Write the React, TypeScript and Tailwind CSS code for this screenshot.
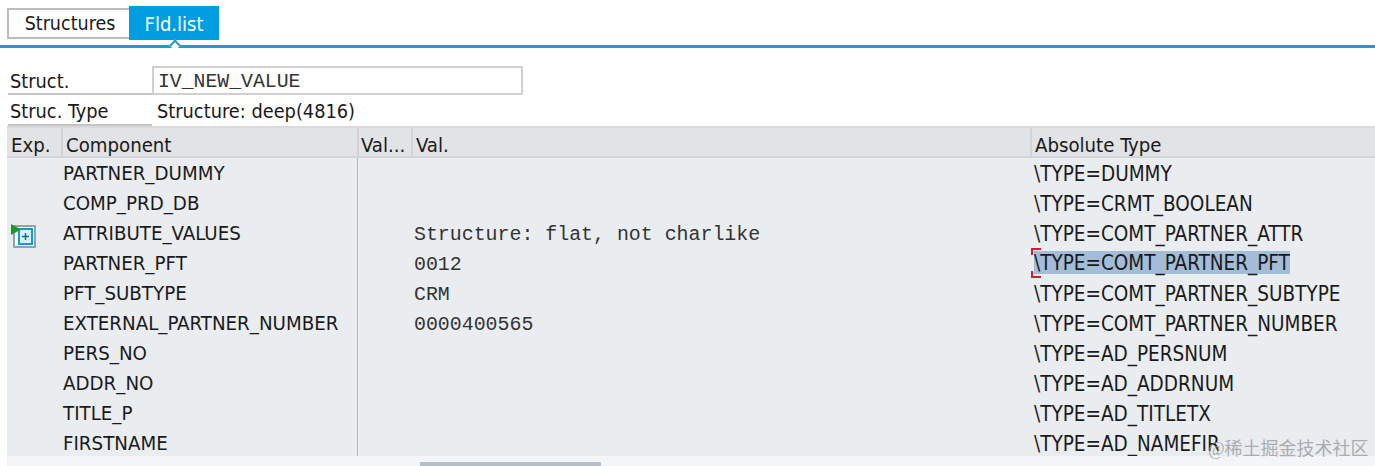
import React from 'react';

const rows = [
  ['PARTNER_DUMMY', '', '\\TYPE=DUMMY'],
  ['COMP_PRD_DB', '', '\\TYPE=CRMT_BOOLEAN'],
  ['ATTRIBUTE_VALUES', 'Structure: flat, not charlike', '\\TYPE=COMT_PARTNER_ATTR'],
  ['PARTNER_PFT', '0012', '\\TYPE=COMT_PARTNER_PFT'],
  ['PFT_SUBTYPE', 'CRM', '\\TYPE=COMT_PARTNER_SUBTYPE'],
  ['EXTERNAL_PARTNER_NUMBER', '0000400565', '\\TYPE=COMT_PARTNER_NUMBER'],
  ['PERS_NO', '', '\\TYPE=AD_PERSNUM'],
  ['ADDR_NO', '', '\\TYPE=AD_ADDRNUM'],
  ['TITLE_P', '', '\\TYPE=AD_TITLETX'],
  ['FIRSTNAME', '', '\\TYPE=AD_NAMEFIR'],
];

const sans = "font-['DejaVu_Sans',sans-serif] font-stretch-condensed";
const mono = "font-['Liberation_Mono',monospace] font-stretch-normal";

const ExpandIcon = () => (
  <svg width="26" height="24" viewBox="0 0 26 24" className="block">
    <rect x="3" y="2" width="21" height="21" fill="#fff" stroke="#93a2ad" strokeWidth="2" />
    <rect x="8" y="5" width="13" height="15" fill="#d8f0fa" stroke="#0d9fd0" strokeWidth="2" />
    <path d="M14.500 9v7M11 12.500h7" stroke="#0b6f9c" strokeWidth="1.500" />
    <path d="M0 0l10 5.500-10 5.500z" fill="#1a9a2c" />
  </svg>
);

export default function App() {
  return (
    <div className={`relative w-[1375px] h-[466px] overflow-hidden bg-white text-[19.800px] leading-[30px] text-[#1a1a1a] ${sans}`}>
      {/* Tabs */}
      <div className="relative h-[48px] pt-[6px] border-b-[3px] border-[#1a9fc9]">
        <div className="flex items-start pl-[7px]">
          <div className="w-[122px] h-[31px] mt-[2px] pt-[1px] pl-[2px] flex items-center justify-center bg-white border-2 border-r-0 border-[#bcbcbc] text-[19.500px]">Structures</div>
          <div className="w-[90px] h-[34px] pt-[2px] flex items-center justify-center bg-[#009de0] text-white text-[20px]">Fld.list</div>
        </div>
        <div className="absolute left-[171px] bottom-[-3px] w-[8px] h-[8px] rotate-45 translate-y-[1px] bg-white border-l-2 border-t-2 border-[#1a9fc9]" />
      </div>

      {/* Header fields */}
      <div className="pt-[18px] pl-[8px]">
        <div className="flex h-[29px]">
          <div className="w-[144px] pl-[2px] pt-[4px] border-b-2 border-[#c4c4c4] flex items-center">Struct.</div>
          <div className={`w-[371px] pl-[4px] pt-[2px] border-2 border-[#d0d0d0] flex items-center text-[#333] ${mono} text-[19.800px]`}>IV_NEW_VALUE</div>
        </div>
        <div className="flex h-[31px]">
          <div className="w-[144px] pl-[2px] pt-[4px] border-b-2 border-[#c4c4c4] flex items-center">Struc. Type</div>
          <div className="pl-[5px] pt-[3px] flex items-center">Structure: deep(4816)</div>
        </div>
      </div>

      {/* Table */}
      <div className="ml-[7px] w-[1368px]">
        <div className="flex h-[32px] items-center bg-[#e1e3e5] border-t-2 border-b-2 border-t-[#d8dadc] border-b-[#d2d5d8] text-[20.200px]">
          <div className="w-[56px] h-full pl-[4px] pt-[6px] border-r-2 border-[#d0d3d6] flex items-center">Exp.</div>
          <div className="w-[296px] h-full pl-[3px] pt-[6px] border-r-2 border-[#d0d3d6] flex items-center">Component</div>
          <div className="w-[54px] h-full pl-[2px] pt-[6px] border-r-2 border-[#d0d3d6] flex items-center">Val...</div>
          <div className="w-[619px] h-full pl-[3px] pt-[6px] border-r-2 border-[#d0d3d6] flex items-center">Val.</div>
          <div className="flex-1 h-full pl-[3px] pt-[6px] flex items-center">Absolute Type</div>
        </div>
        <div className="h-[298px] overflow-hidden bg-[#e9edf0] text-[20.300px]">
          {rows.map(([name, val, type]) => (
            <div key={name} className="flex h-[30px] items-center whitespace-nowrap">
              <div className="w-[56px] h-full pl-[4px] pt-[6px]">{name === 'ATTRIBUTE_VALUES' && <ExpandIcon />}</div>
              <div className="w-[295px] h-full border-r border-[#b5b9bd]">{name}</div>
              <div className="w-[54px] h-full" />
              <div className={`w-[620px] h-full pl-[2px] pt-[2px] ${mono} text-[19.900px] text-[#333]`}>{val}</div>
              <div className="relative flex-1 h-full pl-[2px] text-[20.500px]">
                {name === 'PARTNER_PFT' ? (
                  <>
                    <span className="inline-block h-[23px] mt-[3px] leading-[25px] align-top bg-[#a3bcd7]">{type}</span>
                    <div className="absolute left-[-1px] top-0 w-[10px] h-[7px] border-l-2 border-t-2 border-[#d0202a]" />
                    <div className="absolute left-[-1px] bottom-0 w-[10px] h-[7px] border-l-2 border-b-2 border-[#d0202a]" />
                  </>
                ) : (
                  <div className="pt-[1px]">{type}</div>
                )}
              </div>
            </div>
          ))}
        </div>
        {/* Scrollbar */}
        <div className="h-[10px] bg-[#f3f5f6] pt-[6px] pl-[413px]">
          <div className="w-[181px] h-[4px] bg-[#b3bfca]" />
        </div>
      </div>

      {/* Watermark */}
      <div className="absolute left-[1208px] top-[437px] text-[18px] leading-[24px] text-[#9a9a9a]/80 font-['Liberation_Serif','Noto_Sans_CJK_SC',serif] font-stretch-normal whitespace-nowrap">@稀土掘金技术社区</div>
    </div>
  );
}
